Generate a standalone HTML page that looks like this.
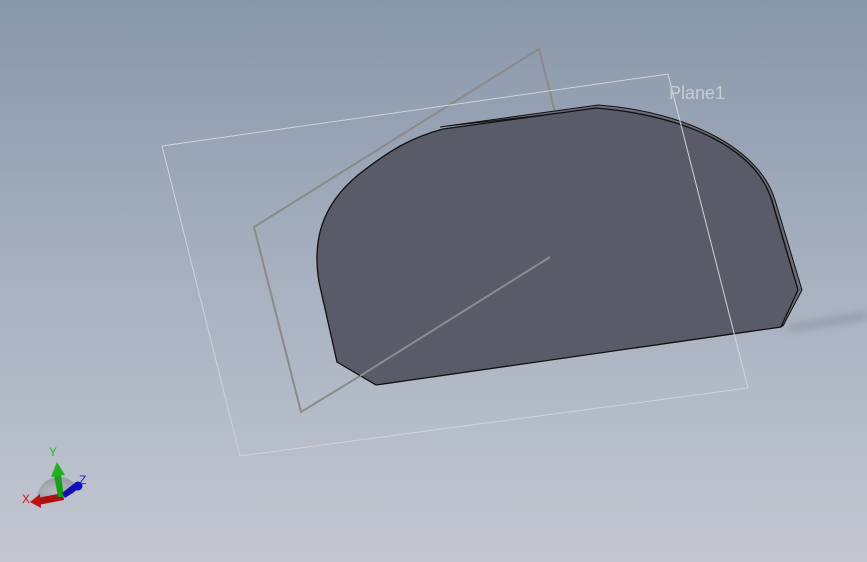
<!DOCTYPE html>
<html><head><meta charset="utf-8"><style>
html,body{margin:0;padding:0;width:867px;height:562px;overflow:hidden}
</style></head><body>
<svg width="867" height="562" viewBox="0 0 867 562" xmlns="http://www.w3.org/2000/svg">
<defs>
<linearGradient id="bg" x1="0" y1="0" x2="0" y2="1">
<stop offset="0" stop-color="#8997aa"/>
<stop offset="0.5" stop-color="#a7b1c0"/>
<stop offset="1" stop-color="#c3c7d2"/>
</linearGradient>
<filter id="bl" x="-20%" y="-200%" width="140%" height="500%"><feGaussianBlur stdDeviation="4"/></filter>
<radialGradient id="dome" cx="0.5" cy="0.7" r="0.6"><stop offset="0" stop-color="#b8bcc4"/><stop offset="1" stop-color="#9a9ea6"/></radialGradient>
</defs>
<rect width="867" height="562" fill="url(#bg)"/>
<path d="M785 326 L867 312 L867 319 L790 331 Z" fill="#7a8292" opacity="0.55" filter="url(#bl)"/>
<path d="M555 112 L539 49 L254 227 L301 412 L360 376" fill="none" stroke="#8a8a8a" stroke-width="2"/>
<path d="M162 146 L668 74 L748 388 L240 456 Z" fill="none" stroke="#d0d2d6" stroke-width="1"/>
<path d="M440 127 L598 105 C690 112 760 150 775 200 L802 290 L783 326 L781 326 L798 290 L772 200 C755 150 688 115 596 109 Z" fill="#6a6c78" stroke="#111" stroke-width="1"/>
<path d="M443 129 L596 108 C690 116 755 150 771 198 L798 290 L781 327 L376 385 L337 362 L319 282 C312 240 322 205 358 175 C390 150 410 138 443 129 Z" fill="#5a5b68" stroke="#111" stroke-width="1.3"/>
<line x1="360" y1="376" x2="550" y2="257" stroke="#8a8c90" stroke-width="2"/>
<line x1="668" y1="74" x2="748" y2="388" stroke="#d0d2d6" stroke-width="1"/>
<text x="669" y="99" font-family="Liberation Sans, sans-serif" font-size="18" fill="#c9ccd2">Plane1</text>
<path d="M37 498 A22 22 0 0 1 75 484 L74 494 Z" fill="url(#dome)"/>
<path d="M37 498 L63 493 L64 500 L38 505 Z" fill="#b01010"/>
<path d="M30 502 L40 494 L41 508 Z" fill="#c01010"/>
<path d="M54 475 L61 475 L64 497 L58 497 Z" fill="#15a015"/>
<path d="M51 477 L57 462 L65 475 Z" fill="#20b020"/>
<path d="M62 493 L76 482 L80 488 L65 498 Z" fill="#1010b0"/>
<circle cx="78" cy="486" r="4.5" fill="#1010c0"/>
<text x="49" y="456" font-family="Liberation Sans, sans-serif" font-size="12" fill="#20c020">Y</text>
<text x="79" y="484" font-family="Liberation Sans, sans-serif" font-size="12" fill="#2020e0">Z</text>
<text x="22" y="503" font-family="Liberation Sans, sans-serif" font-size="12" fill="#e01010">X</text>
</svg>
</body></html>
